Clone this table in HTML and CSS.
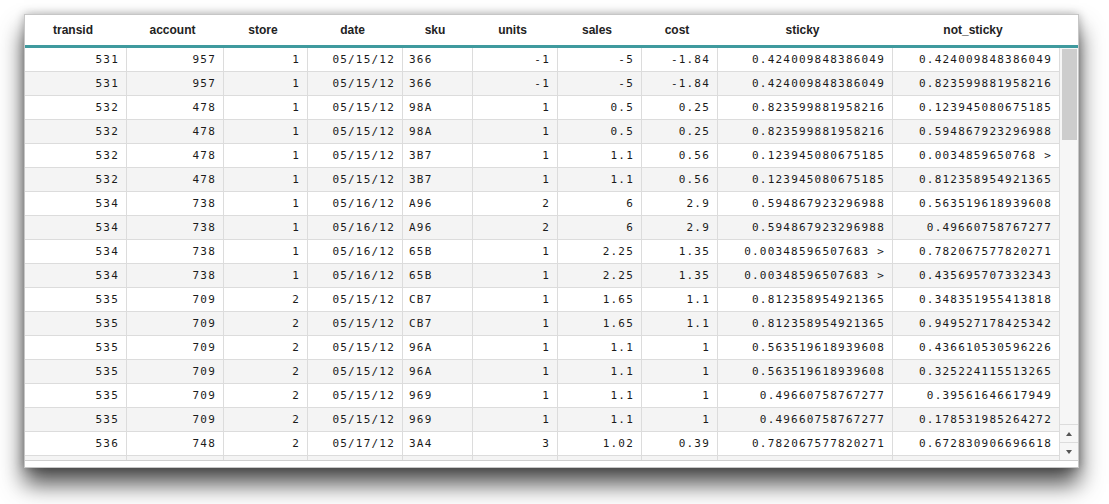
FILE: index.html
```html
<!DOCTYPE html>
<html>
<head>
<meta charset="utf-8">
<link rel="stylesheet" href="styles.css">
</head>
<body>
<div class="window">
  <div class="head">
    <span>transid</span><span>account</span><span>store</span><span>date</span><span>sku</span><span>units</span><span>sales</span><span>cost</span><span>sticky</span><span>not_sticky</span><span></span>
  </div>
  <div class="viewport">
    <div class="rows">
      <div class="row"><span>531</span><span>957</span><span>1</span><span>05/15/12</span><span class="l">366</span><span>-1</span><span>-5</span><span>-1.84</span><span>0.424009848386049</span><span>0.424009848386049</span></div>
      <div class="row"><span>531</span><span>957</span><span>1</span><span>05/15/12</span><span class="l">366</span><span>-1</span><span>-5</span><span>-1.84</span><span>0.424009848386049</span><span>0.823599881958216</span></div>
      <div class="row"><span>532</span><span>478</span><span>1</span><span>05/15/12</span><span class="l">98A</span><span>1</span><span>0.5</span><span>0.25</span><span>0.823599881958216</span><span>0.123945080675185</span></div>
      <div class="row"><span>532</span><span>478</span><span>1</span><span>05/15/12</span><span class="l">98A</span><span>1</span><span>0.5</span><span>0.25</span><span>0.823599881958216</span><span>0.594867923296988</span></div>
      <div class="row"><span>532</span><span>478</span><span>1</span><span>05/15/12</span><span class="l">3B7</span><span>1</span><span>1.1</span><span>0.56</span><span>0.123945080675185</span><span>0.0034859650768 &gt;</span></div>
      <div class="row"><span>532</span><span>478</span><span>1</span><span>05/15/12</span><span class="l">3B7</span><span>1</span><span>1.1</span><span>0.56</span><span>0.123945080675185</span><span>0.812358954921365</span></div>
      <div class="row"><span>534</span><span>738</span><span>1</span><span>05/16/12</span><span class="l">A96</span><span>2</span><span>6</span><span>2.9</span><span>0.594867923296988</span><span>0.563519618939608</span></div>
      <div class="row"><span>534</span><span>738</span><span>1</span><span>05/16/12</span><span class="l">A96</span><span>2</span><span>6</span><span>2.9</span><span>0.594867923296988</span><span>0.49660758767277</span></div>
      <div class="row"><span>534</span><span>738</span><span>1</span><span>05/16/12</span><span class="l">65B</span><span>1</span><span>2.25</span><span>1.35</span><span>0.00348596507683 &gt;</span><span>0.782067577820271</span></div>
      <div class="row"><span>534</span><span>738</span><span>1</span><span>05/16/12</span><span class="l">65B</span><span>1</span><span>2.25</span><span>1.35</span><span>0.00348596507683 &gt;</span><span>0.435695707332343</span></div>
      <div class="row"><span>535</span><span>709</span><span>2</span><span>05/15/12</span><span class="l">CB7</span><span>1</span><span>1.65</span><span>1.1</span><span>0.812358954921365</span><span>0.348351955413818</span></div>
      <div class="row"><span>535</span><span>709</span><span>2</span><span>05/15/12</span><span class="l">CB7</span><span>1</span><span>1.65</span><span>1.1</span><span>0.812358954921365</span><span>0.949527178425342</span></div>
      <div class="row"><span>535</span><span>709</span><span>2</span><span>05/15/12</span><span class="l">96A</span><span>1</span><span>1.1</span><span>1</span><span>0.563519618939608</span><span>0.436610530596226</span></div>
      <div class="row"><span>535</span><span>709</span><span>2</span><span>05/15/12</span><span class="l">96A</span><span>1</span><span>1.1</span><span>1</span><span>0.563519618939608</span><span>0.325224115513265</span></div>
      <div class="row"><span>535</span><span>709</span><span>2</span><span>05/15/12</span><span class="l">969</span><span>1</span><span>1.1</span><span>1</span><span>0.49660758767277</span><span>0.39561646617949</span></div>
      <div class="row"><span>535</span><span>709</span><span>2</span><span>05/15/12</span><span class="l">969</span><span>1</span><span>1.1</span><span>1</span><span>0.49660758767277</span><span>0.178531985264272</span></div>
      <div class="row"><span>536</span><span>748</span><span>2</span><span>05/17/12</span><span class="l">3A4</span><span>3</span><span>1.02</span><span>0.39</span><span>0.782067577820271</span><span>0.672830906696618</span></div>
      <div class="row"><span></span><span></span><span></span><span></span><span class="l"></span><span></span><span></span><span></span><span></span><span></span></div>
    </div>
    <div class="scrollbar">
      <div class="track"><div class="thumb"></div></div>
      <div class="btn"><svg width="6" height="4" viewBox="0 0 6 4"><path d="M0 4 L3 0 L6 4 Z" fill="#555"/></svg></div>
      <div class="btn"><svg width="6" height="4" viewBox="0 0 6 4"><path d="M0 0 L3 4 L6 0 Z" fill="#555"/></svg></div>
    </div>
  </div>
  <div class="foot"></div>
</div>
</body>
</html>
```

FILE: styles.css
```css
html,
body {
  margin: 0;
  background: #ffffff;
}

body {
  min-height: 504px;
  padding-top: 14px;
  box-sizing: border-box;
}

.window {
  margin: 0 0 0 24px;
  width: 1053px;
  border: 1px solid #c6c6c6;
  background: #ffffff;
  box-shadow: 0 16px 22px rgba(0, 0, 0, 0.7), 0 0 9px rgba(0, 0, 0, 0.28);
}

.head,
.row {
  display: grid;
  grid-template-columns: 102px 97px 84px 95px 70px 85px 84px 76px 175px 166px;
}

.head {
  grid-template-columns: 102px 97px 84px 95px 70px 85px 84px 76px 175px 166px 19px;
  height: 33px;
  box-sizing: border-box;
  border-bottom: 3px solid #3f9a9e;
}

.head span {
  font-family: "Liberation Sans", Arial, sans-serif;
  font-weight: bold;
  font-size: 12px;
  color: #222;
  text-align: center;
  line-height: 30px;
  padding-right: 6px;
}

.viewport {
  display: flex;
  height: 412px;
  border-bottom: 1px solid #cfcfcf;
  overflow: hidden;
}

.rows {
  width: 1034px;
  overflow: hidden;
}

.row {
  height: 24px;
  box-sizing: border-box;
  border-bottom: 1px solid #dcdcdc;
}

.row:nth-child(even) {
  background: #f4f4f4;
}

.row span {
  font-family: "DejaVu Sans Mono", monospace;
  font-size: 11px;
  letter-spacing: 1.2px;
  color: #1a1a1a;
  line-height: 23px;
  text-align: right;
  padding: 0 7px 0 6px;
  border-right: 1px solid #dcdcdc;
  white-space: nowrap;
  overflow: hidden;
}

.row span:last-child {
  border-right: none;
}

.row span.l {
  text-align: left;
}

.scrollbar {
  width: 18px;
  border-left: 1px solid #dcdcdc;
  background: #f6f6f6;
  display: flex;
  flex-direction: column;
}

.track {
  flex: 1;
  padding: 1px 1px 0 2px;
}

.thumb {
  height: 91px;
  background: #cdcdcd;
}

.btn {
  height: 18px;
  box-sizing: border-box;
  border-top: 1px solid #dcdcdc;
  display: flex;
  align-items: center;
  justify-content: center;
}

.foot {
  height: 6px;
}
```
